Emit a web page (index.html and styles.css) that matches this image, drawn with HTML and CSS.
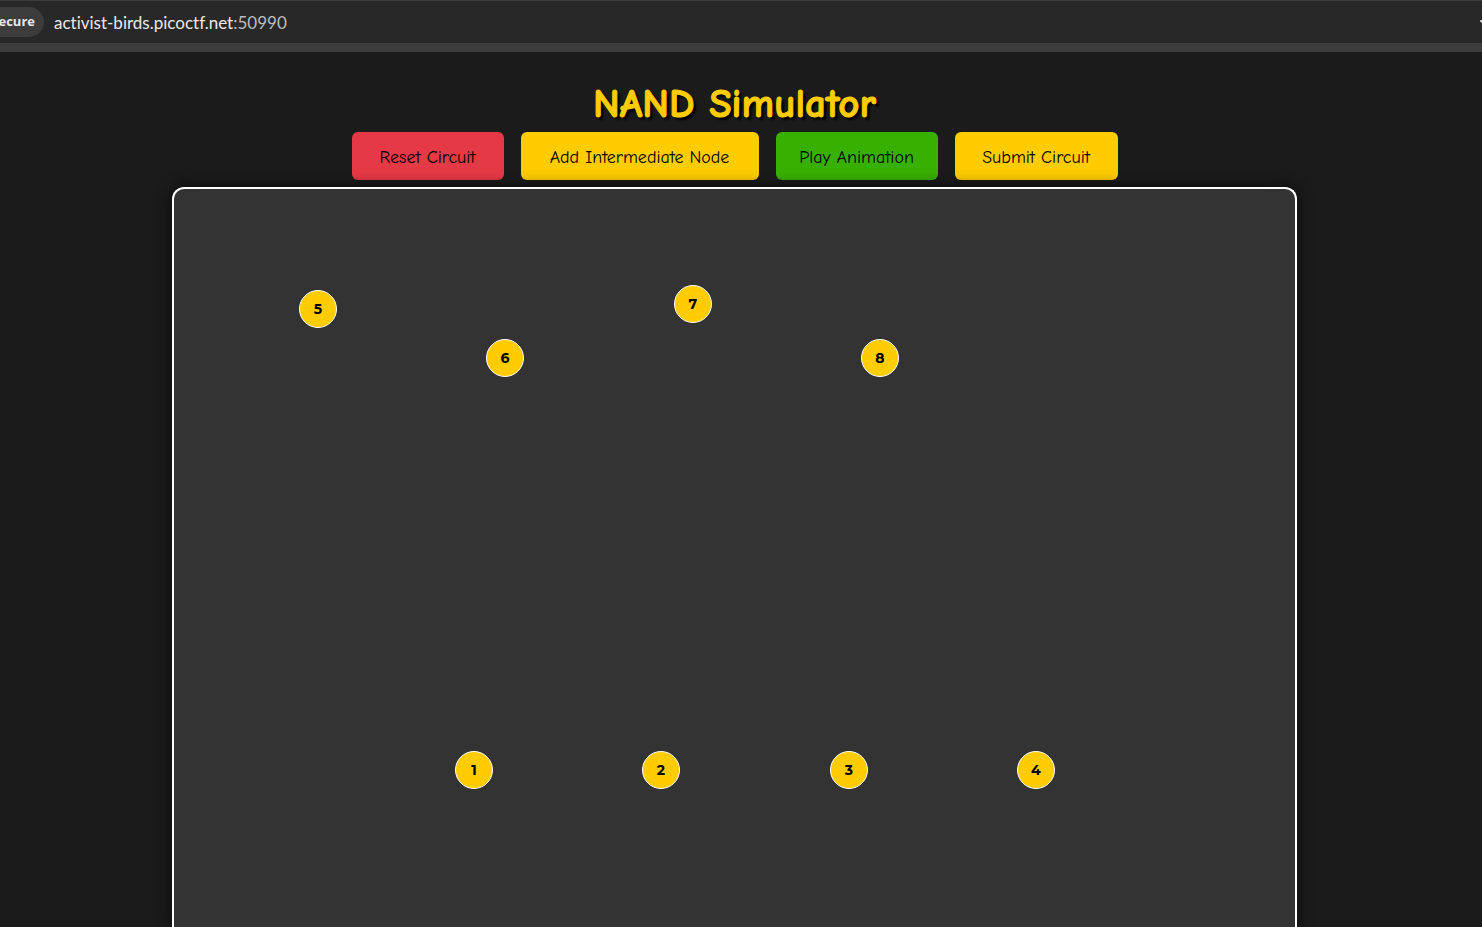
FILE: index.html
```html
<!DOCTYPE html>
<html lang="en">
<head>
<meta charset="utf-8">
<title>NAND Simulator</title>
<link rel="stylesheet" href="styles.css">
</head>
<body>
<header class="browser-bar">
  <span class="security">ecure</span>
  <span class="address">activist-birds.picoctf.net<span class="port">:50990</span></span>
  <svg class="edge-icon" width="2" height="4" viewBox="0 0 2 4" aria-hidden="true"><path d="M0 0h2v3H1V2H0z" fill="#bbb"/></svg>
</header>
<main class="simulator">
  <h1 class="title">NAND Simulator</h1>
  <div class="actions">
    <button class="action reset" type="button">Reset Circuit</button>
    <button class="action add" type="button">Add Intermediate Node</button>
    <button class="action play" type="button">Play Animation</button>
    <button class="action submit" type="button">Submit Circuit</button>
  </div>
  <section class="board" aria-label="Circuit">
    <button class="node node-5" type="button">5</button>
    <button class="node node-6" type="button">6</button>
    <button class="node node-7" type="button">7</button>
    <button class="node node-8" type="button">8</button>
    <button class="node node-1" type="button">1</button>
    <button class="node node-2" type="button">2</button>
    <button class="node node-3" type="button">3</button>
    <button class="node node-4" type="button">4</button>
  </section>
</main>
</body>
</html>
```
FILE: styles.css
```css
* { box-sizing: border-box; }

body {
  margin: 0;
  height: 100vh;
  display: flex;
  flex-direction: column;
  overflow: hidden;
  background: #1b1b1b;
  font-family: "Comic Sans MS", "Comic Neue", Lato, sans-serif;
}

.browser-bar {
  display: flex;
  align-items: center;
  height: 52px;
  flex: none;
  background: #282828;
  border-top: 1px solid #3c3c3c;
  border-bottom: 9px solid #3c3c3c;
  color: #e8e8e8;
}

.security {
  height: 30px;
  padding-right: 9px;
  border-radius: 0 15px 15px 0;
  background: #3c3c3c;
  font-family: "Segoe UI", "Open Sans", sans-serif;
  font-size: 13px;
  font-weight: 700;
  line-height: 29px;
  width: 44px;
  display: flex;
  justify-content: flex-end;
}

.address {
  margin-left: 10px;
  font-family: "Segoe UI", Lato, sans-serif;
  font-size: 17px;
  font-variant-ligatures: none;
}

.port { color: #bdbdbd; }

.edge-icon { margin-left: auto; }

.simulator {
  flex: 1;
  display: flex;
  flex-direction: column;
  align-items: center;
  padding: 28px 13px 0 0;
}

.title {
  margin: 0;
  color: #fc0;
  font-size: 41px;
  line-height: 48px;
  -webkit-text-stroke: 1px #fc0;
  text-shadow: 3px 3px 2px #000;
}

.actions {
  display: flex;
  gap: 17px;
  margin: 4px 0 7px;
}

.action {
  height: 48px;
  padding: 2px 16px 0;
  border: 0;
  border-radius: 6px;
  background: #fc0;
  color: #000;
  font-family: inherit;
  font-size: 18px;
}

.reset { min-width: 152px; background: #e63946; }
.add { min-width: 238px; }
.play { min-width: 162px; background: #38b000; }
.submit { min-width: 163px; }

.board {
  position: relative;
  flex: 1;
  width: 76.6%;
  border: 2px solid #fff;
  border-bottom: 0;
  border-radius: 12px 12px 0 0;
  background: #333;
  box-shadow: 0 0 15px rgba(0, 0, 0, .7);
}

.node {
  position: absolute;
  width: 38px;
  height: 38px;
  padding: 0;
  border: 1px solid #fff;
  border-radius: 50%;
  background: #fc0;
  color: #000;
  font-family: Montserrat, Inter, sans-serif;
  font-size: 14px;
  font-weight: 700;
}

.node-5 { left: 125px; top: 101px; }
.node-6 { left: 312px; top: 150px; }
.node-7 { left: 500px; top: 96px; }
.node-8 { left: 687px; top: 150px; }
.node-1 { left: 281px; top: 562px; }
.node-2 { left: 468px; top: 562px; }
.node-3 { left: 656px; top: 562px; }
.node-4 { left: 843px; top: 562px; }
```
